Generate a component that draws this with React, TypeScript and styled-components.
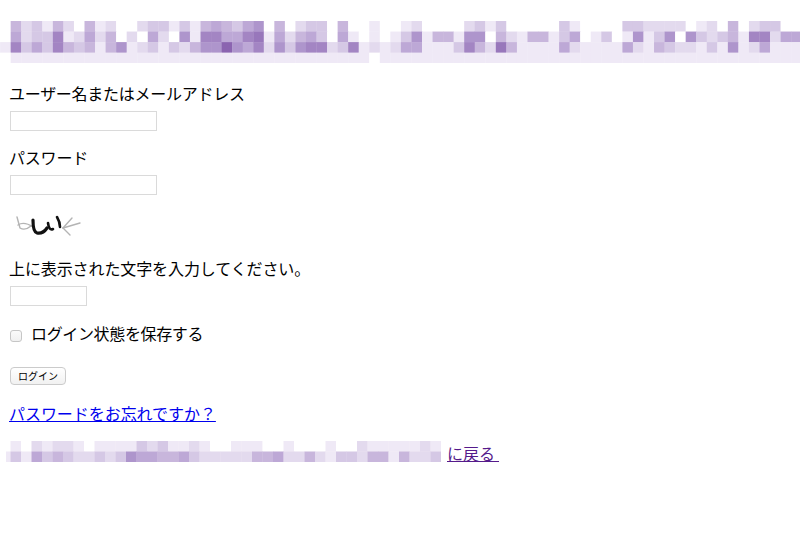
import styled, { createGlobalStyle } from "styled-components";

const GlobalStyle = createGlobalStyle`
  html, body {
    margin: 0;
    padding: 0;
    background: #fff;
  }
  body {
    font-family: "Liberation Serif", "Noto Sans CJK JP", serif;
    font-size: 16px;
    color: #000;
  }
`;

const LEVELS = [
  "#ffffff",
  "#efe9f6",
  "#e3daee",
  "#d5c8e5",
  "#c8b6dc",
  "#bda8d6",
  "#ae95cc",
  "#a385c3",
  "#9877bb",
  "#8b64b0",
];

const titleRows = [
  "04231420412002331314543560402330400100" + "12000023130000031000033222201204023300",
  "0523371252402052061775578152453051010" + "1" + "3614416604214413501301613606323417725" + "5",
  "1735374341461231324669657263677237121" + "2" + "5511137428411115211115214322131612511" + "1",
  "0" + "1".repeat(34) + "0" + "1".repeat(40),
];

const backRows = [
  "010212210111132311210011100100010021111121",
  "131534322323655445322222445224213324414223",
];

const Mosaic = ({ rows, cols, cell, crop = 0 }: { rows: string[]; cols: number; cell: number; crop?: number }) => {
  const width = cols * cell;
  const height = rows.length * cell;
  return (
    <svg width={width - crop} height={height} viewBox={`${crop} 0 ${width - crop} ${height}`}>
      {rows.map((row, y) =>
        row
          .slice(0, cols)
          .split("")
          .map((level, x) => (
            <rect
              key={`${x}-${y}`}
              x={x * cell}
              y={y * cell}
              width={cell + 0.3}
              height={cell + 0.3}
              fill={LEVELS[Number(level)]}
            />
          ))
      )}
    </svg>
  );
};

const Page = styled.div`
  width: 800px;
  height: 540px;
  overflow: hidden;
`;

const Title = styled.h1`
  margin: 0;
  padding-top: 21px;
  height: 42px;
  line-height: 0;
`;

const LoginForm = styled.form`
  display: flex;
  flex-direction: column;
  align-items: flex-start;
  padding: 22px 0 0 9px;
`;

const Field = styled.div`
  display: flex;
  flex-direction: column;
  align-items: flex-start;
  margin-bottom: 18px;
`;

const Label = styled.label<{ $track?: number }>`
  font-size: 16px;
  line-height: 19px;
  margin-bottom: 7px;
  letter-spacing: ${(p) => p.$track ?? 0}px;
`;

const TextInput = styled.input<{ $w: number }>`
  box-sizing: border-box;
  width: ${(p) => p.$w}px;
  height: 20px;
  margin: 0 0 0 1px;
  padding: 0;
  background: #fff;
  border: 1px solid #dadada;
  outline: none;
`;

const Captcha = styled.svg`
  display: block;
  margin: -3px 0 0 6px;
  filter: blur(0.4px);
`;

const CaptchaField = styled(Field)`
  margin-top: 4px;
`;

const CaptchaLabel = styled(Label)`
  margin-top: 16px;
`;

const RememberRow = styled.label`
  display: flex;
  align-items: center;
  gap: 9px;
  height: 19px;
  margin: 1px 0 0 1px;
  font-size: 16px;
  line-height: 19px;
  letter-spacing: -0.35px;
`;

const CheckBox = styled.span`
  display: block;
  box-sizing: border-box;
  width: 12px;
  height: 12px;
  margin-top: 2px;
  background: linear-gradient(#fafafa, #f0f0f0);
  border: 1px solid #c6c6c6;
  border-radius: 3px;
`;

const LoginButton = styled.button`
  box-sizing: border-box;
  width: 56px;
  height: 18px;
  margin: 23px 0 0 1px;
  padding: 0;
  background: linear-gradient(#ffffff, #f1f1f1);
  border: 1px solid #cbcbcb;
  border-radius: 4px;
  font-family: "Noto Sans CJK JP", sans-serif;
  font-size: 10px;
  line-height: 14px;
  color: #000;
`;

const ForgotLink = styled.a`
  margin-top: 20px;
  font-size: 16px;
  line-height: 19px;
  letter-spacing: -0.05px;
  color: #0000ee;
`;

const BackRow = styled.p`
  display: flex;
  align-items: center;
  margin: 17px 0 0;
  padding-left: 6px;
  height: 21px;
`;

const BackLink = styled.a`
  margin: 6px 0 0 6px;
  font-size: 16px;
  line-height: 19px;
  color: #551a8b;
`;

export default function App() {
  return (
    <Page>
      <GlobalStyle />
      <Title>
        <Mosaic rows={titleRows} cols={76} cell={10.55} />
      </Title>
      <LoginForm onSubmit={(e) => e.preventDefault()}>
        <Field>
          <Label $track={-0.27}>ユーザー名またはメールアドレス</Label>
          <TextInput type="text" $w={147} />
        </Field>
        <Field>
          <Label $track={-0.2}>パスワード</Label>
          <TextInput type="password" $w={147} />
        </Field>
        <Captcha width="70" height="30" viewBox="0 0 70 30" fill="none" aria-label="captcha">
          <g stroke="#b4b4b4" strokeWidth="1.4" strokeLinecap="round">
            <path d="M2 7 L5 18 Q10 21 16 16" />
            <path d="M3 15 Q9 11 18 17" />
            <path d="M48 18 L57 8" />
            <path d="M48 18 L65 13" />
            <path d="M48 18 L55 25" />
          </g>
          <g stroke="#111111" strokeLinecap="round">
            <path strokeWidth="3.2" d="M18 10 Q18 22 22 23 Q28 24 32 18" />
            <path strokeWidth="2.6" d="M33 13 Q34 21 38 19" />
            <path strokeWidth="2.6" d="M42 7 Q45 12 45 17" />
          </g>
        </Captcha>
        <CaptchaField>
          <CaptchaLabel $track={-0.1}>上に表示された文字を入力してください。</CaptchaLabel>
          <TextInput type="text" $w={77} />
        </CaptchaField>
        <RememberRow>
          <CheckBox />
          ログイン状態を保存する
        </RememberRow>
        <LoginButton type="submit">ログイン</LoginButton>
        <ForgotLink href="#">パスワードをお忘れですか？</ForgotLink>
      </LoginForm>
      <BackRow>
        <Mosaic rows={backRows} cols={42} cell={10.5} crop={6} />
        <BackLink href="#">に戻る&nbsp;</BackLink>
      </BackRow>
    </Page>
  );
}
